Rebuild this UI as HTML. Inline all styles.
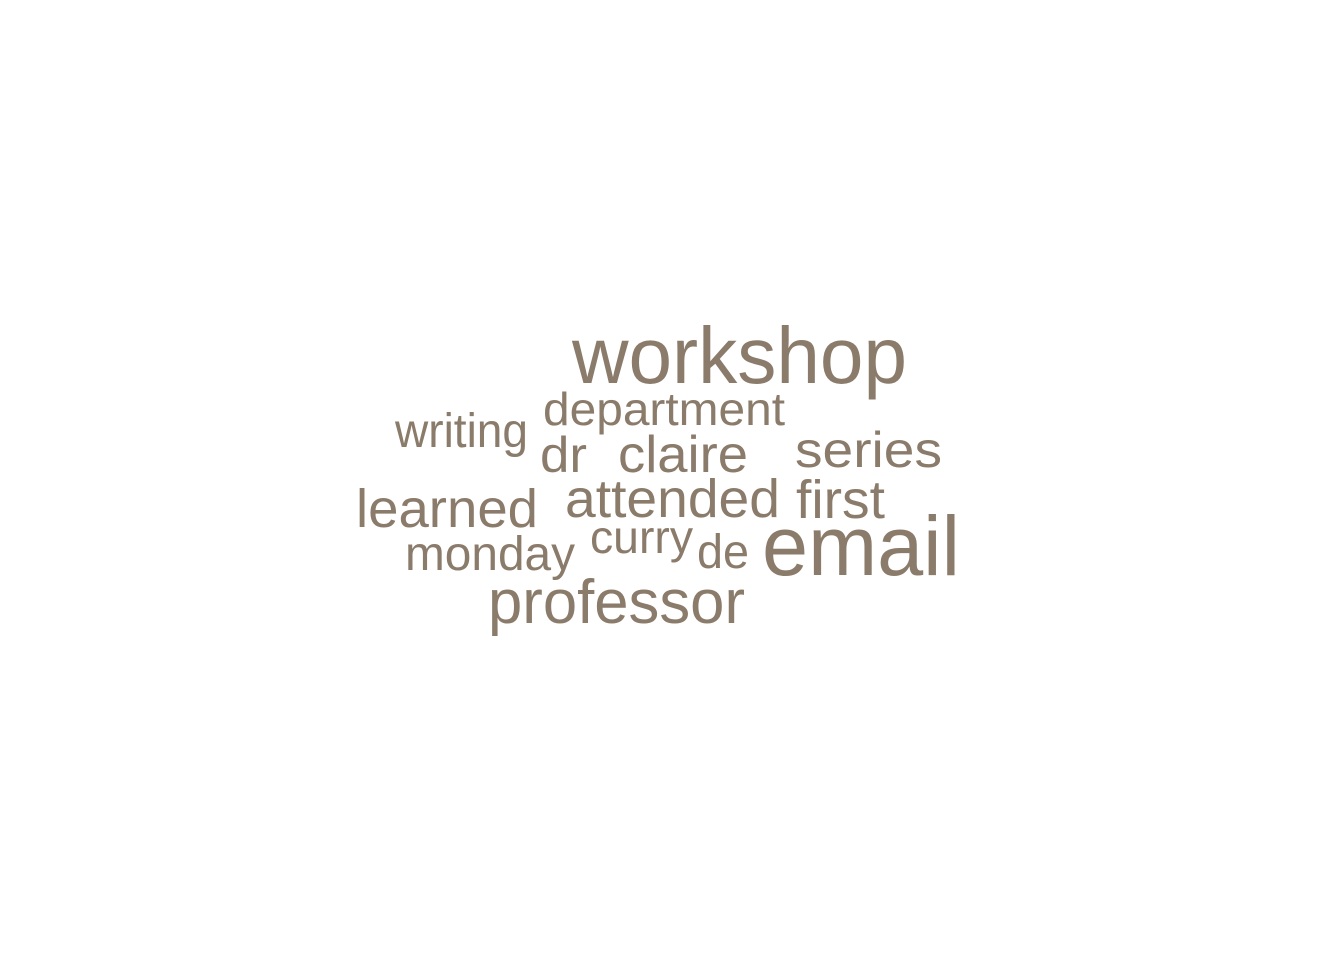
<!DOCTYPE html>
<html><head><meta charset="utf-8"><style>
html,body{margin:0;padding:0;background:#fff;width:1344px;height:960px;overflow:hidden}
svg{display:block}
text{font-family:"Liberation Sans",Arial,sans-serif;fill:#8b7b6b}
</style></head><body>
<svg width="1344" height="960" viewBox="0 0 1344 960">
<text x="572" y="383" font-size="80" textLength="335" lengthAdjust="spacingAndGlyphs">workshop</text>
<text x="762" y="575" font-size="84" textLength="198" lengthAdjust="spacingAndGlyphs">email</text>
<text x="543" y="425" font-size="46" textLength="242" lengthAdjust="spacingAndGlyphs">department</text>
<text x="395" y="447" font-size="48" textLength="133" lengthAdjust="spacingAndGlyphs">writing</text>
<text x="540" y="472" font-size="50" textLength="47" lengthAdjust="spacingAndGlyphs">dr</text>
<text x="618" y="472" font-size="52" textLength="130" lengthAdjust="spacingAndGlyphs">claire</text>
<text x="795" y="467" font-size="50" textLength="147" lengthAdjust="spacingAndGlyphs">series</text>
<text x="356" y="527" font-size="54" textLength="182" lengthAdjust="spacingAndGlyphs">learned</text>
<text x="565" y="517" font-size="54" textLength="215" lengthAdjust="spacingAndGlyphs">attended</text>
<text x="796" y="518" font-size="54" textLength="89" lengthAdjust="spacingAndGlyphs">first</text>
<text x="590" y="553" font-size="46" textLength="103" lengthAdjust="spacingAndGlyphs">curry</text>
<text x="405" y="570" font-size="48" textLength="170" lengthAdjust="spacingAndGlyphs">monday</text>
<text x="697" y="568" font-size="48" textLength="52" lengthAdjust="spacingAndGlyphs">de</text>
<text x="488" y="623" font-size="62" textLength="257" lengthAdjust="spacingAndGlyphs">professor</text>
</svg>
</body></html>
